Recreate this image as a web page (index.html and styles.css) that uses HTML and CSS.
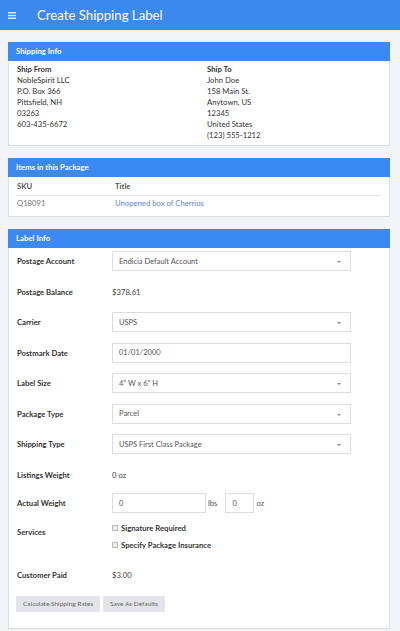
FILE: index.html
```html
<!DOCTYPE html>
<html>
<head>
<meta charset="utf-8">
<link rel="stylesheet" href="styles.css">
</head>
<body>
<header class="topbar">
  <svg class="menu" width="8" height="7" viewBox="0 0 8 7"><rect x="0" y="0" width="8" height="1.4" fill="#dfe9fb"/><rect x="0" y="2.8" width="8" height="1.4" fill="#dfe9fb"/><rect x="0" y="5.6" width="8" height="1.4" fill="#dfe9fb"/></svg>
  <h1 class="title">Create Shipping Label</h1>
</header>
<main class="content">
  <section class="panel">
    <div class="panel-heading">Shipping Info</div>
    <div class="panel-body addresses">
      <div class="address">
        <div class="addr-title">Ship From</div>
        <div>NobleSpirit LLC</div>
        <div>P.O. Box 366</div>
        <div>Pittsfield, NH</div>
        <div>03263</div>
        <div>603-435-6672</div>
      </div>
      <div class="address">
        <div class="addr-title">Ship To</div>
        <div>John Doe</div>
        <div>158 Main St.</div>
        <div>Anytown, US</div>
        <div>12345</div>
        <div>United States</div>
        <div>(123) 555-1212</div>
      </div>
    </div>
  </section>

  <section class="panel">
    <div class="panel-heading">Items in this Package</div>
    <div class="items">
      <div class="items-row items-head"><span class="col-sku">SKU</span><span>Title</span></div>
      <div class="items-row"><span class="col-sku">Q18091</span><a class="link" href="#">Unopened box of Cherrios</a></div>
    </div>
  </section>

  <section class="panel">
    <div class="panel-heading">Label Info</div>
    <div class="panel-body form">
      <div class="row"><label class="lbl">Postage Account</label><div class="select">Endicia Default Account<span class="caret"></span></div></div>
      <div class="row"><label class="lbl">Postage Balance</label><span class="value">$378.61</span></div>
      <div class="row"><label class="lbl">Carrier</label><div class="select">USPS<span class="caret"></span></div></div>
      <div class="row"><label class="lbl">Postmark Date</label><div class="input">01/01/2000</div></div>
      <div class="row"><label class="lbl">Label Size</label><div class="select">4" W x 6" H<span class="caret"></span></div></div>
      <div class="row"><label class="lbl">Package Type</label><div class="select">Parcel<span class="caret"></span></div></div>
      <div class="row"><label class="lbl">Shipping Type</label><div class="select">USPS First Class Package<span class="caret"></span></div></div>
      <div class="row row-listings"><label class="lbl">Listings Weight</label><span class="value">0 oz</span></div>
      <div class="row row-weight"><label class="lbl">Actual Weight</label>
        <div class="weights"><div class="input w-lbs">0</div><span class="unit">lbs</span><div class="input w-oz">0</div><span class="unit">oz</span></div>
      </div>
      <div class="row row-services"><label class="lbl">Services</label>
        <div class="checks">
          <div class="check"><span class="box"></span>Signature Required</div>
          <div class="check"><span class="box"></span>Specify Package Insurance</div>
        </div>
      </div>
      <div class="row"><label class="lbl">Customer Paid</label><span class="value">$3.00</span></div>
      <div class="buttons"><button class="btn btn-calc">Calculate Shipping Rates</button><button class="btn btn-save">Save As Defaults</button></div>
    </div>
  </section>
</main>
</body>
</html>
```

FILE: styles.css
```css
* { box-sizing: border-box; }
html, body { margin: 0; padding: 0; }
body {
  width: 400px;
  height: 631px;
  overflow: hidden;
  background: #f2f3f7;
  font-family: Lato, "Open Sans", sans-serif;
  color: #333;
  font-size: 7.7px;
}
.topbar {
  height: 30px;
  background: #3b89ef;
  display: flex;
  align-items: center;
  padding-left: 8px;
}
.menu { display: block; margin-top: 1px; }
.title {
  margin: 0 0 0 21px;
  color: #fff;
  font-size: 13.2px;
  font-weight: 400;
  letter-spacing: 0;
}
.content { padding: 12px 10px 0 8px; }
.panel {
  background: #fff;
  border: 1px solid #dcdee2;
  border-top: none;
  margin-bottom: 12px;
}
.panel-heading {
  background: #3b89f2;
  color: #fff;
  height: 19px;
  line-height: 19px;
  padding-left: 8px;
  font-size: 7.8px;
  font-weight: 700;
  margin: 0 -1px;
}
.addresses {
  display: grid;
  grid-template-columns: 190px 1fr;
  padding: 3px 8px 4px;
  line-height: 11px;
}
.addr-title { font-weight: 700; }
.items { padding: 0 7px 6px; color: #777; }
.items-row { display: flex; align-items: center; height: 19px; padding-left: 1px; }
.items-head { color: #555; font-weight: 700; border-bottom: 1px solid #e6e6e6; }
.items-row + .items-row { height: 14px; }
.col-sku { width: 98px; }
.link { color: #5f83e6; text-decoration: none; }
.form { padding: 3px 8px 16px; }
.row {
  display: flex;
  align-items: center;
  min-height: 20px;
  margin-bottom: 10.5px;
}
.lbl {
  width: 95px;
  flex: none;
  font-weight: 700;
  color: #333;
}
.value { color: #444; }
.select, .input {
  width: 239px;
  height: 20px;
  border: 1px solid #dcdde0;
  background: #fff;
  padding-left: 6px;
  display: flex;
  align-items: center;
  color: #555;
  font-size: 7.5px;
  position: relative;
}
.caret {
  position: absolute;
  right: 9px;
  top: 9px;
  border-left: 2px solid transparent;
  border-right: 2px solid transparent;
  border-top: 2px solid #888;
}
.weights { display: flex; align-items: center; }
.w-lbs { width: 94px; }
.w-oz { width: 29px; }
.unit { color: #555; margin: 0 8px 0 2px; }
.unit:last-child { margin: 0 0 0 2px; }
.row-listings { margin-bottom: 8.5px; }
.row-weight { margin-bottom: 7px; }
.row-services { align-items: flex-start; margin-bottom: 11px; }
.row-services .lbl { padding-top: 7px; line-height: 10px; }
.checks { line-height: 17px; font-weight: 700; color: #333; }
.check { display: flex; align-items: center; }
.box {
  width: 6px; height: 6px;
  border: 1px solid #bbb;
  background: #eee;
  margin-right: 3px;
  margin-top: -2px;
}
.buttons { display: flex; gap: 3px; margin-left: -1px; margin-top: 9px; }
.btn {
  height: 16px;
  border: none;
  background: #e3e4e7;
  color: #666;
  font-family: inherit;
  font-size: 6.5px;
  padding: 0;
}
.btn-calc { width: 84px; }
.btn-save { width: 62px; }
```
